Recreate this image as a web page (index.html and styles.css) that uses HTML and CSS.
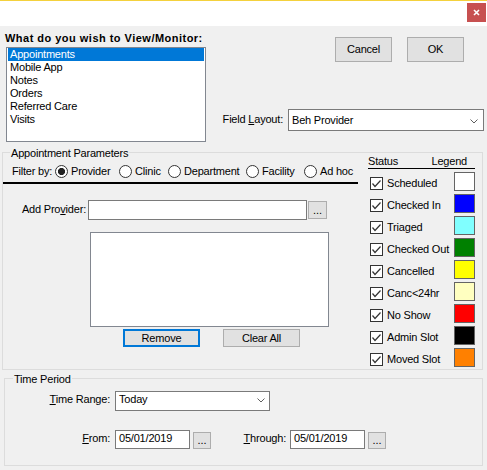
FILE: index.html
```html
<!DOCTYPE html>
<html>
<head>
<meta charset="utf-8">
<title>View/Monitor</title>
<link rel="stylesheet" href="styles.css">
</head>
<body>
<div class="titlebar">
  <div class="close"><svg width="7" height="7" viewBox="0 0 7 7"><path d="M1 1L6 6M6 1L1 6" stroke="#fff" stroke-width="1.6" fill="none"/></svg></div>
</div>
<div class="main">
  <div class="top">
    <div class="top-left">
      <div class="heading">What do you wish to View/Monitor:</div>
      <div class="listbox view-list">
        <div class="item selected">Appointments</div>
        <div class="item">Mobile App</div>
        <div class="item">Notes</div>
        <div class="item">Orders</div>
        <div class="item">Referred Care</div>
        <div class="item">Visits</div>
      </div>
    </div>
    <div class="top-right">
      <div class="dlg-buttons">
        <button class="btn btn-lg">Cancel</button>
        <button class="btn btn-lg">OK</button>
      </div>
      <div class="field-layout">
        <span class="fl-label">Field <u>L</u>ayout:</span>
        <div class="combo combo-layout"><span>Beh Provider</span><svg class="chev" width="8" height="5" viewBox="0 0 8 5"><path d="M0.5 0.5L4 4L7.5 0.5" fill="none" stroke="#5f5f5f"/></svg></div>
      </div>
    </div>
  </div>

  <div class="group appt">
    <div class="group-title">Appointment Parameters</div>
    <div class="appt-left">
      <div class="filter-row">
        <span class="filter-label">Filter by:</span>
        <span class="radio-item ri-provider"><span class="radio on"></span>Provider</span>
        <span class="radio-item ri-clinic"><span class="radio"></span>Clinic</span>
        <span class="radio-item ri-dept"><span class="radio"></span>Department</span>
        <span class="radio-item ri-facility"><span class="radio"></span>Facility</span>
        <span class="radio-item"><span class="radio"></span>Ad hoc</span>
      </div>
      <div class="add-row">
        <span class="add-label">Add Pro<u>v</u>ider:</span>
        <div class="text-input provider-input"></div>
        <button class="btn dots add-dots">...</button>
      </div>
      <div class="listbox provider-list"></div>
      <div class="list-buttons">
        <button class="btn btn-sm focused">Remove</button>
        <button class="btn btn-sm">Clear All</button>
      </div>
    </div>
    <div class="status-panel">
      <div class="status-head"><span>Status</span><span>Legend</span></div>
      <div class="status-rows">
        <div class="srow"><span class="srow-check"><span class="cb"><svg width="11" height="11" viewBox="0 0 11 11"><path d="M1.5 5.5L4 8.5L9.5 2.5" fill="none" stroke="#333" stroke-width="1.2"/></svg></span>Scheduled</span><span class="swatch c-white"></span></div>
        <div class="srow"><span class="srow-check"><span class="cb"><svg width="11" height="11" viewBox="0 0 11 11"><path d="M1.5 5.5L4 8.5L9.5 2.5" fill="none" stroke="#333" stroke-width="1.2"/></svg></span>Checked In</span><span class="swatch c-blue"></span></div>
        <div class="srow"><span class="srow-check"><span class="cb"><svg width="11" height="11" viewBox="0 0 11 11"><path d="M1.5 5.5L4 8.5L9.5 2.5" fill="none" stroke="#333" stroke-width="1.2"/></svg></span>Triaged</span><span class="swatch c-cyan"></span></div>
        <div class="srow"><span class="srow-check"><span class="cb"><svg width="11" height="11" viewBox="0 0 11 11"><path d="M1.5 5.5L4 8.5L9.5 2.5" fill="none" stroke="#333" stroke-width="1.2"/></svg></span>Checked Out</span><span class="swatch c-green"></span></div>
        <div class="srow"><span class="srow-check"><span class="cb"><svg width="11" height="11" viewBox="0 0 11 11"><path d="M1.5 5.5L4 8.5L9.5 2.5" fill="none" stroke="#333" stroke-width="1.2"/></svg></span>Cancelled</span><span class="swatch c-yellow"></span></div>
        <div class="srow"><span class="srow-check"><span class="cb"><svg width="11" height="11" viewBox="0 0 11 11"><path d="M1.5 5.5L4 8.5L9.5 2.5" fill="none" stroke="#333" stroke-width="1.2"/></svg></span>Canc&lt;24hr</span><span class="swatch c-ltyellow"></span></div>
        <div class="srow"><span class="srow-check"><span class="cb"><svg width="11" height="11" viewBox="0 0 11 11"><path d="M1.5 5.5L4 8.5L9.5 2.5" fill="none" stroke="#333" stroke-width="1.2"/></svg></span>No Show</span><span class="swatch c-red"></span></div>
        <div class="srow"><span class="srow-check"><span class="cb"><svg width="11" height="11" viewBox="0 0 11 11"><path d="M1.5 5.5L4 8.5L9.5 2.5" fill="none" stroke="#333" stroke-width="1.2"/></svg></span>Admin Slot</span><span class="swatch c-black"></span></div>
        <div class="srow"><span class="srow-check"><span class="cb"><svg width="11" height="11" viewBox="0 0 11 11"><path d="M1.5 5.5L4 8.5L9.5 2.5" fill="none" stroke="#333" stroke-width="1.2"/></svg></span>Moved Slot</span><span class="swatch c-orange"></span></div>
      </div>
    </div>
  </div>

  <div class="group time">
    <div class="group-title">Time Period</div>
    <div class="time-row tr-range">
      <span class="tlabel"><u>T</u>ime Range:</span>
      <div class="combo combo-range"><span>Today</span><svg class="chev" width="8" height="5" viewBox="0 0 8 5"><path d="M0.5 0.5L4 4L7.5 0.5" fill="none" stroke="#5f5f5f"/></svg></div>
    </div>
    <div class="time-row tr-dates">
      <span class="tlabel"><u>F</u>rom:</span>
      <div class="text-input date-input">05/01/2019</div>
      <button class="btn dots date-btn">...</button>
      <span class="through-label"><u>T</u>hrough:</span>
      <div class="text-input date-input">05/01/2019</div>
      <button class="btn dots date-btn">...</button>
    </div>
  </div>
</div>
</body>
</html>
```
FILE: styles.css
```css
* { box-sizing: border-box; }
html, body { margin: 0; padding: 0; }
body {
  width: 487px;
  height: 470px;
  overflow: hidden;
  font-family: "Liberation Sans", Arial, sans-serif;
  font-size: 11px;
  line-height: 13px;
  letter-spacing: -0.2px;
  color: #000;
  background: #f0f0f0;
}
u { text-decoration: underline; }

.titlebar {
  height: 26px;
  background: #fff;
  border-top: 1px solid #f4d13d;
  display: flex;
  justify-content: flex-end;
  padding: 2px 1px 0 0;
}
.close {
  width: 19px;
  height: 19px;
  background: #c75050;
  display: flex;
  align-items: center;
  justify-content: center;
}

.main { height: 444px; }

.top { display: flex; height: 126px; }
.top-left { width: 206px; padding: 6px 0 0 5px; }
.heading {
  font-weight: bold;
  letter-spacing: 0.48px;
  white-space: nowrap;
}
.listbox {
  background: #fff;
  border: 1px solid #828790;
  padding: 0 1px;
}
.view-list { width: 200px; height: 95px; margin: 2px 0 0 1px; }
.item { height: 13px; padding-left: 2px; white-space: nowrap; }
.item.selected { background: #0078d7; color: #fff; }

.top-right {
  flex: 1;
  display: flex;
  flex-direction: column;
  align-items: flex-end;
  padding-right: 3px;
}
.dlg-buttons { display: flex; gap: 15px; margin: 11px 20px 0 0; }

.btn {
  font: inherit;
  letter-spacing: inherit;
  color: #000;
  background: #e1e1e1;
  border: 1px solid #adadad;
  border-radius: 0;
  padding: 0;
  margin: 0;
  display: flex;
  align-items: center;
  justify-content: center;
}
.btn-lg { width: 57px; height: 25px; }
.btn-sm { width: 77px; height: 18px; }
.btn.focused { border: 2px solid #0078d7; }
.dots { letter-spacing: 0; }

.field-layout { display: flex; align-items: flex-start; margin-top: 47px; }
.fl-label { padding-top: 4px; margin-right: 5px; white-space: nowrap; }

.combo {
  background: #fff;
  border: 1px solid #7a7a7a;
  display: flex;
  justify-content: space-between;
  align-items: flex-start;
  white-space: nowrap;
}
.combo-layout { width: 196px; height: 22px; padding: 4px 5px 0 3px; }
.combo-layout .chev { margin-top: 5px; }
.combo-range { width: 155px; height: 20px; padding: 1px 4px 0 3px; }
.combo-range .chev { margin-top: 5px; }

.text-input { background: #fff; border: 1px solid #7a7a7a; }

.group { position: relative; border: 1px solid #dcdcdc; }
.group-title {
  position: absolute;
  top: -6px;
  left: 7px;
  padding: 0 1px;
  background: #f0f0f0;
  white-space: nowrap;
}
.time .group-title { left: 8px; }

.appt {
  margin-left: 2px;
  width: 481px;
  height: 218px;
  display: flex;
  padding-right: 7px;
}
.appt-left { width: 355px; flex: none; }

.filter-row {
  margin-top: 11px;
  height: 20px;
  padding: 0 0 3px 9px;
  border-bottom: 2px solid #000;
  display: flex;
  align-items: center;
  white-space: nowrap;
}
.filter-label { width: 43px; flex: none; }
.radio-item { display: flex; align-items: center; gap: 3px; flex: none; }
.ri-provider { width: 64px; }
.ri-clinic { width: 49px; }
.ri-dept { width: 78px; }
.ri-facility { width: 58px; }
.radio {
  width: 13px;
  height: 13px;
  flex: none;
  border: 1px solid #333;
  border-radius: 50%;
  background: #fff;
}
.radio.on { background: radial-gradient(circle at center, #222 0, #222 3.2px, #fff 3.9px); }

.add-row { display: flex; align-items: flex-start; margin-top: 16px; height: 20px; }
.add-label { width: 85px; flex: none; text-align: right; padding: 3px 2px 0 0; white-space: nowrap; }
.provider-input { width: 219px; height: 20px; }
.add-dots { width: 19px; height: 18px; margin: 1px 0 0 1px; }

.provider-list { width: 239px; height: 95px; margin: 12px 0 0 87px; }
.list-buttons { display: flex; gap: 23px; margin: 2px 0 0 120px; }

.status-panel { width: 107px; flex: none; margin: 2px 0 0 10px; }
.status-head {
  display: flex;
  justify-content: space-between;
  height: 14px;
  border-bottom: 1px solid #000;
  padding-right: 8px;
}
.status-rows { margin-top: 3px; display: flex; flex-direction: column; gap: 3px; }
.srow { display: flex; height: 19px; }
.srow-check {
  display: flex;
  align-items: center;
  gap: 4px;
  height: 13px;
  margin: 5px 0 0 2px;
  white-space: nowrap;
}
.cb {
  width: 13px;
  height: 13px;
  flex: none;
  border: 1px solid #333;
  background: #fff;
  display: block;
}
.cb svg { display: block; }
.swatch { margin-left: auto; width: 21px; height: 19px; border: 1px solid #646464; flex: none; }
.c-white { background: #fff; }
.c-blue { background: #0000ff; }
.c-cyan { background: #80ffff; }
.c-green { background: #008000; }
.c-yellow { background: #ffff00; }
.c-ltyellow { background: #ffffc0; }
.c-red { background: #ff0000; }
.c-black { background: #000; }
.c-orange { background: #ff8000; }

.time { margin: 8px 0 0 4px; width: 479px; height: 88px; }
.time-row { display: flex; align-items: flex-start; }
.tr-range { margin-top: 12px; height: 20px; }
.tr-dates { margin-top: 19px; height: 19px; }
.tlabel { width: 110px; flex: none; text-align: right; padding: 2px 5px 0 0; white-space: nowrap; }
.date-input { width: 75px; height: 19px; padding: 1px 0 0 3px; white-space: nowrap; }
.date-btn { width: 18px; height: 17px; margin: 2px 0 0 3px; }
.through-label { width: 79px; flex: none; text-align: right; padding: 2px 4px 0 0; white-space: nowrap; }
```
